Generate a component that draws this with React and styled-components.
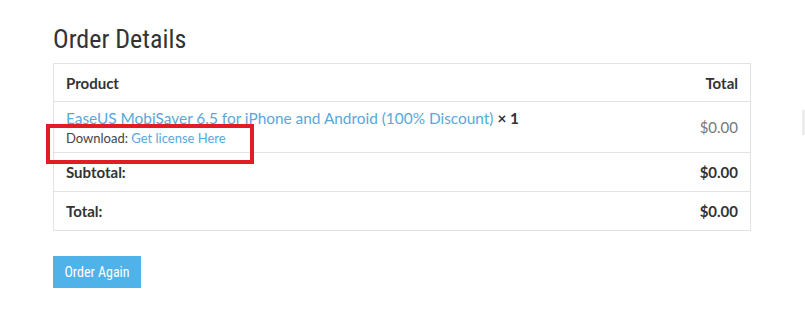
import React from "react";
import styled, { createGlobalStyle } from "styled-components";

const Global = createGlobalStyle`
  html, body { margin: 0; padding: 0; background: #fff; }
  body { font-family: "Lato", "Liberation Sans", sans-serif; color: #444; }
`;

const Page = styled.div`
  position: relative;
  width: 805px;
  height: 309px;
  padding: 24px 0 0 53px;
  box-sizing: border-box;
  overflow: hidden;
`;

const Title = styled.h2`
  margin: 0 0 9px;
  font-family: "Roboto Condensed", "Liberation Sans Narrow", "Roboto", sans-serif;
  font-weight: 400;
  font-size: 26px;
  line-height: 30px;
  color: #333;
`;

const Table = styled.table`
  width: 698px;
  border-collapse: collapse;
  border: 1px solid #e3e3e3;
  font-size: 15px;
`;

const Row = styled.tr`
  border-top: 1px solid #e3e3e3;
  height: ${(p) => p.$h || 38}px;
`;

const Cell = styled.td`
  padding: 0 12px;
  text-align: ${(p) => (p.$right ? "right" : "left")};
  font-weight: ${(p) => (p.$bold ? 700 : 400)};
  color: ${(p) => (p.$muted ? "#777" : "#333")};
  vertical-align: middle;
`;

const ItemLine = styled.div`
  font-size: 15.4px;
`;

const Link = styled.a`
  color: #5aa7dd;
  text-decoration: none;
`;

const Qty = styled.strong`
  color: #333;
`;

const Meta = styled.div`
  margin-top: 3px;
  font-size: 13px;
  color: #444;
`;

const Button = styled.button`
  margin-top: 25px;
  width: 88px;
  height: 32px;
  border: 0;
  background: #4fb2e8;
  color: #fff;
  font-family: "Roboto Condensed", "Liberation Sans Narrow", "Roboto", sans-serif;
  font-size: 14px;
  padding: 0;
`;

const Highlight = styled.div`
  position: absolute;
  left: 46px;
  top: 124px;
  width: 208px;
  height: 40px;
  border: 4px solid #e21c26;
  box-sizing: border-box;
  pointer-events: none;
`;

const EdgeShade = styled.div`
  position: absolute;
  right: 0;
  top: 110px;
  width: 3px;
  height: 25px;
  background: #ececec;
`;

export default function App() {
  return (
    <>
      <Global />
      <Page>
        <Title>Order Details</Title>
        <Table>
          <tbody>
            <Row $h={38}>
              <Cell $bold>Product</Cell>
              <Cell $bold $right>Total</Cell>
            </Row>
            <Row $h={51}>
              <Cell>
                <ItemLine>
                  <Link href="#">EaseUS MobiSaver 6.5 for iPhone and Android (100% Discount)</Link>{" "}
                  <Qty>× 1</Qty>
                </ItemLine>
                <Meta>
                  Download: <Link href="#">Get license Here</Link>
                </Meta>
              </Cell>
              <Cell $right $muted>$0.00</Cell>
            </Row>
            <Row $h={39}>
              <Cell $bold>Subtotal:</Cell>
              <Cell $bold $right>$0.00</Cell>
            </Row>
            <Row $h={39}>
              <Cell $bold>Total:</Cell>
              <Cell $bold $right>$0.00</Cell>
            </Row>
          </tbody>
        </Table>
        <Button>Order Again</Button>
        <Highlight />
        <EdgeShade />
      </Page>
    </>
  );
}
